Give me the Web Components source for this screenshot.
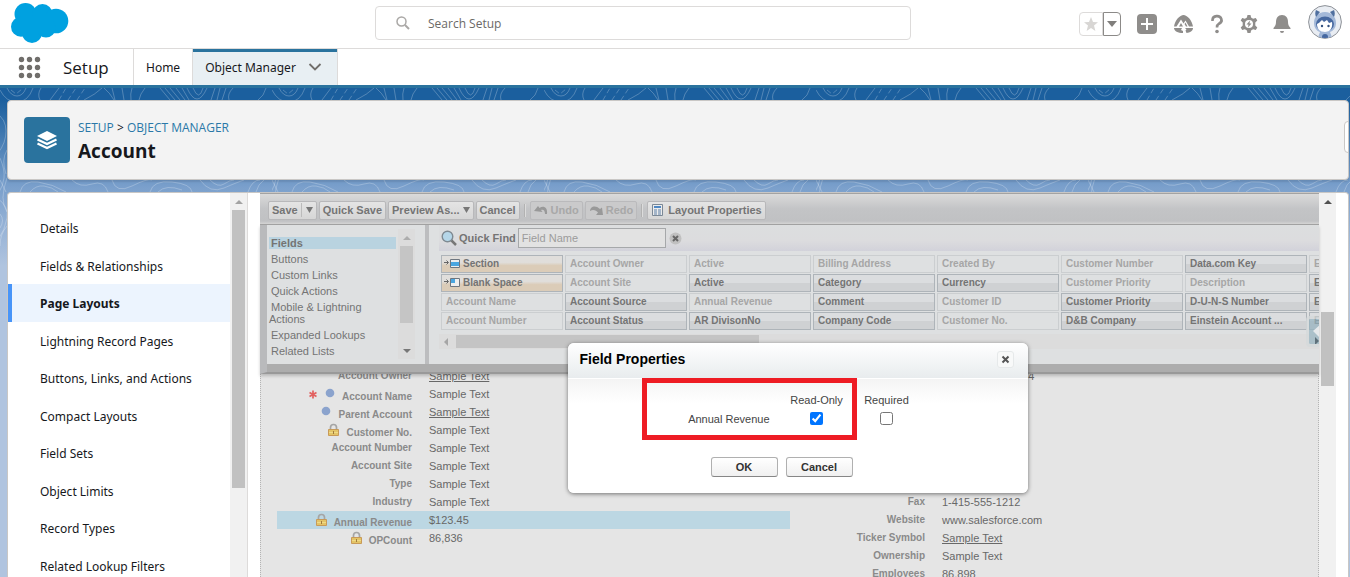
<!DOCTYPE html>
<html lang="en">
<head>
<meta charset="utf-8">
<title>Account | Object Manager</title>
<style>
  body {
    margin: 0;
    font-family: "Open Sans", "Noto Sans", sans-serif;
    font-size: 12px;
    color: #16181c;
    background: #fff;
  }
</style>
</head>
<body>
<setup-app></setup-app>

<script>
/**
 * Attach an open shadow root and fill it
 * @param {HTMLElement} host - The element that owns the root
 * @param {string} css - Styles for the root
 * @param {string} html - Markup for the root
 */
function fill(host, css, html) {
  host.attachShadow({ mode: 'open' }).innerHTML = `
    <style>* { box-sizing: border-box; } ${css}</style>
    ${html}
  `;
}

/**
 * SetupHeader web component
 * Logo, global search and the action icons
 */
class SetupHeader extends HTMLElement {
  constructor() {
    super();
    fill(this, `
      :host {
        display: grid;
        grid-template-columns: 375fr 536fr 439fr;
        align-items: center;
        height: 49px;
        border-bottom: 1px solid #dddbda;
        background: #fff;
      }
      .logo { display: block; margin-left: 10px; margin-bottom: 3px; }
      .search {
        display: flex;
        align-items: center;
        gap: 18px;
        height: 34px;
        padding-left: 20px;
        margin-bottom: 2px;
        border: 1px solid #dddbda;
        border-radius: 4px;
      }
      .search input {
        flex: 1;
        min-width: 0;
        padding: 0;
        border: 0;
        outline: 0;
        font: inherit;
        background: none;
      }
      .search input::placeholder { color: #6b6967; }
      .actions {
        display: flex;
        align-items: center;
        justify-content: flex-end;
        gap: 14px;
        padding-right: 8px;
      }
      button {
        display: block;
        padding: 0;
        border: 0;
        background: none;
      }
      svg { display: block; }
      .favorites { display: flex; margin-right: 2px; }
      .favorites button {
        display: grid;
        place-items: center;
        width: 24px;
        height: 24px;
        border: 1px solid #dddbda;
        border-radius: 4px 0 0 4px;
      }
      .favorites button + button {
        width: 18px;
        border-color: #8c8a88;
        border-radius: 0 4px 4px 0;
      }
      .avatar { margin-left: 3px; margin-bottom: 5px; }
    `, `
      <a href="#" class="logo" aria-label="Salesforce">
        <svg width="60" height="42" viewBox="10 2 60 42" fill="#00a1e0">
          <circle cx="25.500" cy="14" r="11"/><circle cx="42.500" cy="14" r="10"/>
          <circle cx="56" cy="21" r="12.300"/><circle cx="21" cy="26.700" r="10"/>
          <circle cx="32" cy="33" r="10"/><circle cx="46" cy="28" r="9.600"/>
          <path d="M21 16h32v16H21z"/>
        </svg>
      </a>
      <label class="search">
        <svg width="14" height="14" viewBox="0 0 14 14" fill="none" stroke="#aaa8a6" stroke-width="1.500">
          <circle cx="5.500" cy="5.500" r="4.500"/><path d="M9 9l4 4" stroke-width="2"/>
        </svg>
        <input type="text" placeholder="Search Setup" aria-label="Search Setup">
      </label>
      <div class="actions">
        <div class="favorites">
          <button aria-label="Add favorite">
            <svg width="16" height="16" viewBox="0 0 16 16" fill="#d8d6d4"><path d="M8 1l2 5 5 .3-4 3.300L12.400 15 8 12l-4.400 3L5 9.600 1 6.300 6 6z"/></svg>
          </button>
          <button aria-label="Favorites list">
            <svg width="10" height="6" viewBox="0 0 10 6" fill="#807e7c"><path d="M0 0h10L5 6z"/></svg>
          </button>
        </div>
        <button aria-label="Global actions">
          <svg width="20" height="20" viewBox="0 0 20 20"><rect width="20" height="20" rx="4" fill="#8f8d8b"/><path d="M10 4v12M4 10h12" stroke="#fff" stroke-width="2"/></svg>
        </button>
        <button aria-label="Guidance center">
          <svg width="24" height="20" viewBox="0 0 24 20" fill="#8f8d8b">
            <path d="M3 12.500C4 6 9 1 12.500 1S21 6 22 12.500h-4l-3.500-6-2 3-2.500-4-4.500 7z"/>
            <path d="M8 12.500l2-3.500 2 3.500zM13.500 10l1-1.500 2 4H15z"/>
            <path d="M3 14h8l-1 2 2 1v2c-5 0-9-2-9-5zM14 14h8c0 3-3 4.500-6.500 5l-1-2.500 1-1z"/>
          </svg>
        </button>
        <button aria-label="Help">
          <svg width="16" height="20" viewBox="0 0 16 20"><path d="M3.500 7V6a4.500 4 0 1 1 6.500 3.700C8.300 10.700 8 11.500 8 13.500" fill="none" stroke="#8f8d8b" stroke-width="2.600"/><circle cx="8" cy="17.500" r="1.800" fill="#8f8d8b"/></svg>
        </button>
        <button aria-label="Setup">
          <svg width="20" height="20" viewBox="0 0 20 20">
            <path d="M8.500 1h3l.6 2.600 2 1.200 2.700-.8 1.500 2.600-2 2v2.800l2 2-1.500 2.600-2.700-.8-2 1.200-.6 2.600h-3l-.6-2.600-2-1.200-2.700.8-1.500-2.600 2-2V8.600l-2-2L3.200 4l2.700.8 2-1.200z" fill="#8f8d8b"/>
            <circle cx="10" cy="10" r="4" fill="#fff"/><path d="M11 6.500l-3.500 4h2L9 13.500l3.500-4h-2z" fill="#8f8d8b"/>
          </svg>
        </button>
        <button aria-label="Notifications">
          <svg width="18" height="20" viewBox="0 0 18 20" fill="#8f8d8b"><path d="M9 1C5 1 3 4 3 8c0 3-1 4-2.500 6v1h17v-1C16 12 15 11 15 8c0-4-2-7-6-7zM7 17h4a2 2 0 0 1-4 0z"/></svg>
        </button>
        <button class="avatar" aria-label="View profile">
          <svg width="34" height="34" viewBox="0 0 34 34">
            <defs><clipPath id="face"><circle cx="17" cy="17" r="16"/></clipPath></defs>
            <circle cx="17" cy="17" r="16.400" fill="#e9edf3" stroke="#8d9197"/>
            <g clip-path="url(#face)">
              <path d="M17 7c7 0 11 5 11 11 0 5-3 8-6 9l3 8H9l3-8c-3-1-6-4-6-9C6 12 10 7 17 7z" fill="#a3b8d8"/>
              <path d="M8 5l4 2-4 5c-1-2-1-5 0-7zM26 5l-4 2 4 5c1-2 1-5 0-7z" fill="#4f6f9f"/>
              <ellipse cx="17" cy="19" rx="9" ry="7.500" fill="#4668a0"/>
              <path d="M9 19c2-1 3-2 5-4l2 2 3-2 2 3 3-1c1 6-2 10-7 10s-8-3-8-8z" fill="#fff"/>
              <circle cx="14" cy="21" r="1.200" fill="#31507e"/><circle cx="20.500" cy="21" r="1.200" fill="#31507e"/>
              <circle cx="17" cy="32" r="3" fill="#4668a0"/>
            </g>
          </svg>
        </button>
      </div>
    `);
  }
}

/**
 * SetupNav web component
 * App launcher, app name and the context tabs
 */
class SetupNav extends HTMLElement {
  constructor() {
    super();
    fill(this, `
      :host {
        display: flex;
        height: 39px;
        border-bottom: 3px solid #2a739e;
        background: #fff;
      }
      button { display: grid; place-items: center; padding: 0; border: 0; background: none; }
      .launcher { margin-left: 18px; }
      .app {
        display: flex;
        align-items: center;
        width: 93px;
        padding-left: 22px;
        border-right: 1px solid #dddbda;
        font-size: 17px;
      }
      nav { display: flex; font-family: "Noto Sans", sans-serif; }
      a {
        display: flex;
        align-items: center;
        padding: 0 12px;
        color: inherit;
        text-decoration: none;
      }
      .tab {
        display: flex;
        width: 146px;
        border: solid #dddbda;
        border-width: 0 1px;
        box-shadow: inset 0 3px #2a739e;
        background: #e8eff3;
      }
    `, `
      <button class="launcher" aria-label="App Launcher">
        <svg width="23" height="23" viewBox="0 0 23 23" fill="#706e6b">
          <circle cx="3.500" cy="3.500" r="2.700"/><circle cx="11.500" cy="3.500" r="2.700"/><circle cx="19.500" cy="3.500" r="2.700"/>
          <circle cx="3.500" cy="11.500" r="2.700"/><circle cx="11.500" cy="11.500" r="2.700"/><circle cx="19.500" cy="11.500" r="2.700"/>
          <circle cx="3.500" cy="19.500" r="2.700"/><circle cx="11.500" cy="19.500" r="2.700"/><circle cx="19.500" cy="19.500" r="2.700"/>
        </svg>
      </button>
      <div class="app">Setup</div>
      <nav>
        <a href="#">Home</a>
        <div class="tab">
          <a href="#">Object Manager</a>
          <button aria-label="Object Manager list">
            <svg width="14" height="8" viewBox="0 0 14 8" fill="none" stroke="#706e6b" stroke-width="1.800"><path d="M1.500 1L7 6.500 12.500 1"/></svg>
          </button>
        </div>
      </nav>
    `);
  }
}

/**
 * TopoBackdrop web component
 * The contour line artwork that fades out behind the cards
 */
class TopoBackdrop extends HTMLElement {
  constructor() {
    super();
    fill(this, `
      :host {
        position: absolute;
        inset: 0;
        background: linear-gradient(#1b5f9e 0, #1b5f9e 12px, #7ba0cc 100px, #b0c4df 178px);
      }
      svg { display: block; width: 100%; height: 178px; }
    `, `
      <svg aria-hidden="true">
        <defs>
          <pattern id="topo" width="272" height="178" patternUnits="userSpaceOnUse">
            <g fill="none" stroke="#fff" stroke-opacity=".24">
              <path d="M0 2q6 12 17 12T33 0M7 0q4 8 10 8t9-8M41 0q-4 6-1 12M50 12l9-12M84 12q12-6 18-12M104 0q6 5 10 12M112 0l3 12M122 0l2 12M132 0q-2 6-1 12M145 0q-5 6-6 12"/>
              <path d="M11 2l5 4 6-5M59 12l7-12M68 12l8-12M77 12l8-12" stroke-dasharray="5 3"/>
              <path d="M160 0l10 12M165 0l10 12M170 0l10 12M176 0l9 12M182 0l7 12M187 0q10 22 20 0M193 0q6 14 10 0M215 0l-4 12M220 0l-3 12M226 0l-4 12M233 0q-6 6-4 12M258 12q6-4 8-12"/>
              <path d="M20 104q3-12 18-10t28 10M30 104q6-7 14-6t14 6M0 92l6 12M72 92q8 8 20 4t16 8M112 92q4 14 20 6t20-6M150 104q3-12 22-10t20 10M158 104q8-8 24-2M200 92q10 14 24 8t20-8M210 92q8 8 14 4t10-4M248 104q4-12 12-12M256 104q2-8 8-12"/>
              <path d="M-4 25q10 6 10 18t-8 22M0 70q5 12 4 20t-5 14M7 62q-6 10-1 24M-3 110q12 8 10 20t-9 22M0 126q5 6 0 14M7 90q-8 22 0 34M7 138q-7 8-7 20"/>
            </g>
          </pattern>
        </defs>
        <rect width="100%" height="100%" fill="url(#topo)"/>
      </svg>
    `);
  }
}

/**
 * PageHeading web component
 * Object icon with breadcrumb; the object name is slotted
 */
class PageHeading extends HTMLElement {
  constructor() {
    super();
    fill(this, `
      :host {
        position: relative;
        display: flex;
        align-items: center;
        gap: 8px;
        height: 80px;
        padding-left: 16px;
        border: 1px solid #c9c7c5;
        border-radius: 4px;
        background: #f3f3f3;
        box-shadow: 0 2px 2px rgba(0, 0, 0, .1);
        overflow: hidden;
      }
      .icon {
        display: grid;
        place-items: center;
        width: 46px;
        height: 46px;
        border-radius: 4px;
        background: #2a739e;
      }
      .title { padding-top: 4px; }
      nav { line-height: 18px; }
      a { color: #2a78a8; text-decoration: none; }
      h1 { margin: 0; font-size: 19px; line-height: 28px; }
      .drawer {
        position: absolute;
        top: 20px;
        right: -12px;
        width: 16px;
        height: 32px;
        border: 1px solid #c9c7c5;
        border-radius: 4px;
        background: #fff;
      }
    `, `
      <div class="icon">
        <svg width="20" height="20" viewBox="0 0 20 20">
          <path d="M10 1l10 5-10 5L0 6z" fill="#fff"/>
          <path d="M.5 9.500L10 14l9.500-4.500M.5 13.500L10 18l9.500-4.500" fill="none" stroke="#fff" stroke-width="2.200"/>
        </svg>
      </div>
      <div class="title">
        <nav><a href="#">SETUP</a> &gt; <a href="#">OBJECT MANAGER</a></nav>
        <h1><slot></slot></h1>
      </div>
      <button class="drawer" aria-label="Open help panel"></button>
    `);
  }
}

/**
 * ScrollRail web component
 * Vertical scroll track; --start and --thumb place the thumb
 */
class ScrollRail extends HTMLElement {
  constructor() {
    super();
    fill(this, `
      :host {
        display: flex;
        flex-direction: column;
        flex: none;
        width: 17px;
        background: #f1f1f1;
      }
      .arrow { display: grid; place-items: center; height: 17px; }
      .thumb {
        height: var(--thumb);
        margin: var(--start, 0) 2px 0;
        background: var(--thumb-color, #c1c1c1);
      }
      .down { margin-top: auto; }
      :host(:not([down])) .down { display: none; }
    `, `
      <span class="arrow"><svg width="8" height="4" viewBox="0 0 8 4" style="fill:var(--up,#a3a3a3)"><path d="M4 0l4 4H0z"/></svg></span>
      <div class="thumb"></div>
      <span class="arrow down"><svg width="8" height="4" viewBox="0 0 8 4" fill="#777"><path d="M0 0h8L4 4z"/></svg></span>
    `);
  }
}

/**
 * SetupSidebar web component
 * Navigation between the parts of one object
 */
class SetupSidebar extends HTMLElement {
  constructor() {
    super();
    const items = ['Details', 'Fields & Relationships', 'Page Layouts', 'Lightning Record Pages',
      'Buttons, Links, and Actions', 'Compact Layouts', 'Field Sets', 'Object Limits',
      'Record Types', 'Related Lookup Filters'];
    const links = items.map((item) => `
      <a href="#" ${item === 'Page Layouts' ? 'aria-current="page"' : ''}>${item.replace('&', '&amp;')}</a>
    `).join('');
    fill(this, `
      :host {
        display: flex;
        flex: none;
        width: 240px;
        border-right: 1px solid #dddbda;
        font-family: "Noto Sans", sans-serif;
      }
      nav {
        display: grid;
        grid-auto-rows: 1fr;
        flex: 1;
        height: 391px;
        padding-top: 16px;
      }
      a {
        display: flex;
        align-items: center;
        padding: 2px 0 0 32px;
        color: inherit;
        text-decoration: none;
      }
      a[aria-current] {
        background: #ecf4fe;
        box-shadow: inset 4px 0 #4794f8;
        font-weight: 700;
      }
      scroll-rail { --thumb: 278px; }
    `, `<nav>${links}</nav><scroll-rail></scroll-rail>`);
  }
}

/**
 * ToolButton web component
 * Toolbar button; attributes: menu, split, disabled
 */
class ToolButton extends HTMLElement {
  constructor() {
    super();
    const split = this.hasAttribute('split');
    const arrow = this.hasAttribute('menu') || split
      ? `<svg class="${split ? 'split' : ''}" width="7" height="6" viewBox="0 0 7 6"><path d="M0 0h7L3.500 6z" fill="#777"/></svg>`
      : '';
    fill(this, `
      :host { display: block; }
      button {
        display: flex;
        align-items: center;
        gap: 3px;
        height: 19px;
        padding: 0 3px;
        border: 1px solid #b8b8ba;
        border-radius: 2px;
        font: bold 11px "Liberation Sans", Arial, sans-serif;
        color: #747474;
        background: linear-gradient(#e4e4e4, #d6d6d6);
        white-space: nowrap;
      }
      button:disabled { color: #a8a8a8; border-color: #bababc; background: #cacacb; }
      svg.split { box-sizing: content-box; padding: 4px 0 4px 4px; border-left: 1px solid #bbb; }
    `, `<button ${this.hasAttribute('disabled') ? 'disabled' : ''}><slot></slot>${arrow}</button>`);
  }
}

/**
 * EditorToolbar web component
 * Save, undo and property actions of the layout editor
 */
class EditorToolbar extends HTMLElement {
  constructor() {
    super();
    fill(this, `
      :host {
        display: flex;
        align-items: center;
        gap: 2px;
        height: 32px;
        padding: 2px 8px 0;
        border: solid #a3a3a3;
        border-width: 1px 0;
        background: linear-gradient(#dadada, #c3c4c6 50%, #c0c1c3 90%, #d4d4d4);
      }
      .sep { width: 2px; height: 13px; margin: 0 2px; background: #dcdcdc; border-left: 1px solid #b2b2b2; }
      svg { display: block; }
    `, `
      <tool-button split>Save</tool-button>
      <tool-button>Quick Save</tool-button>
      <tool-button menu>Preview As...</tool-button>
      <tool-button>Cancel</tool-button>
      <span class="sep"></span>
      <tool-button disabled>
        <svg width="14" height="12" viewBox="0 0 14 12"><path d="M0 7l4-5 1.500 2C9 1 14 3 13 10h-2c0-4-2-5-4-4L8.500 8z" fill="#999"/></svg>Undo
      </tool-button>
      <tool-button disabled>
        <svg width="14" height="12" viewBox="0 0 14 12"><path d="M14 11H7l2-2.500C7 6 4 5 1 7 1 3 6 0 11 5l2-1.500z" fill="#999"/></svg>Redo
      </tool-button>
      <span class="sep"></span>
      <tool-button>
        <svg width="14" height="12" viewBox="0 0 14 12"><path d="M1.500.5h10v11h-10z" fill="#ececec" stroke="#7b8896"/><path d="M3 2h7v2H3z" fill="#4f88c4"/><path d="M3 6h3M7 6h3M3 8h3M7 8h3M3 10h3M7 10h3" stroke="#5d7ea6"/></svg>Layout Properties
      </tool-button>
    `);
  }
}

/**
 * FieldPalette web component
 * Category list, quick find and the tiles that can be dragged to the layout
 */
class FieldPalette extends HTMLElement {
  constructor() {
    super();
    const categories = ['Fields', 'Buttons', 'Custom Links', 'Quick Actions',
      'Mobile &amp; Lightning Actions', 'Expanded Lookups', 'Related Lists'];
    // Tiles run down each column; a leading "-" marks one already on the layout
    const tiles = ['*Section', '*Blank Space', '-Account Name', '-Account Number',
      '-Account Owner', '-Account Site', 'Account Source', 'Account Status',
      '-Active', 'Active', '-Annual Revenue', 'AR DivisonNo',
      '-Billing Address', 'Category', 'Comment', 'Company Code',
      '-Created By', 'Currency', '-Customer ID', '-Customer No.',
      '-Customer Number', '-Customer Priority', 'Customer Priority', 'D&amp;B Company',
      'Data.com Key', '-Description', 'D-U-N-S Number', 'Einstein Account ...',
      '-E', 'E', 'E', 'E'];
    const special = {
      '*Section': '<path d="M6.500 1.500h9v8h-9z" fill="#eee" stroke="#6d7680"/><path d="M7 4h8v4H7z" fill="#4aa6e0"/>',
      '*Blank Space': '<path d="M6.500 1.500h9v8h-9z" fill="#eee" stroke="#6d7680"/><path d="M7 2h4v4H7z" fill="#4aa6e0"/>',
    };
    const tileHtml = tiles.map((tile) => {
      if (special[tile]) {
        return `<div class="tile special"><svg width="17" height="11" viewBox="0 0 17 11">
          <path d="M0 4.500h4M2.500 2.500l2 2-2 2" fill="none" stroke="#666"/>${special[tile]}</svg>${tile.slice(1)}</div>`;
      }
      return tile[0] === '-'
        ? `<div class="tile used">${tile.slice(1)}</div>`
        : `<div class="tile">${tile}</div>`;
    }).join('');
    fill(this, `
      :host {
        position: relative;
        z-index: 1;
        display: flex;
        height: 149px;
        border-left: 7px solid #b9babc;
        border-bottom: 2px solid #999;
        background: #dee0e1;
        box-shadow: inset 0 -8px #adadad, 0 2px 3px rgba(0, 0, 0, .2);
      }
      .categories {
        display: flex;
        width: 162px;
        height: 139px;
        border-right: 4px solid #bcbdbf;
      }
      ul {
        width: 131px;
        margin: 0;
        padding: 12px 2px 0;
        list-style: none;
        line-height: 12px;
      }
      li { margin-bottom: 4px; text-indent: 2px; }
      li:first-child { background: #b9d3e0; font-weight: 700; }
      .categories scroll-rail {
        --thumb: 77px;
        --thumb-color: #c5c5c5;
        --up: #adadad;
        height: 130px;
        margin-top: 4px;
        background: #dcdcdc;
      }
      .fields { flex: 1; min-width: 0; height: 139px; padding-left: 10px; overflow: hidden; position: relative; }
      .find {
        display: flex;
        align-items: center;
        gap: 2px;
        height: 26px;
        padding-left: 2px;
        font-weight: 700;
        background: linear-gradient(#dcdedf, #dcdcde 60%, #d2d2da);
      }
      input {
        width: 148px;
        height: 20px;
        padding: 0 3px;
        border: 1px solid #a6a8aa;
        font: 11px "Liberation Sans", Arial, sans-serif;
        background: #e2e2e2;
      }
      input::placeholder { color: #9c9c9c; }
      .clear { padding: 0; border: 0; background: none; }
      svg { display: block; flex: none; }
      .tiles {
        display: grid;
        grid-auto-flow: column;
        grid-template-rows: repeat(4, 18px);
        grid-auto-columns: 122px;
        gap: 1px 2px;
        padding: 4px 0 0 2px;
        font-size: 10px;
        font-weight: 700;
        line-height: 15px;
      }
      .tile {
        display: flex;
        padding-left: 4px;
        border: 1px solid #aeb4b9;
        background: linear-gradient(#dbdddf 50%, #cfd1d3 50%);
        white-space: nowrap;
      }
      .used { border-color: #cbced0; color: #a6a6a6; background: #dee0e1; }
      .special { gap: 2px; padding-left: 2px; background: linear-gradient(#e0dedb 40%, #dbccb8 60%); }
      .special svg { margin-top: 2px; }
      .hscroll { display: flex; align-items: center; gap: 8px; height: 15px; margin-top: 4px; padding-left: 5px; background: #dcdcdc; }
      .hscroll div { width: 303px; height: 13px; background: #c4c4c4; }
      .pager {
        position: absolute;
        top: 91px;
        right: -9px;
        display: grid;
        place-items: center;
        width: 22px;
        height: 31px;
        padding: 0;
        border: 3px solid rgba(213, 217, 219, .8);
        border-radius: 4px;
        background: rgba(150, 180, 192, .7);
        background-clip: padding-box;
      }
    `, `
      <div class="categories">
        <ul>${categories.map((name) => `<li>${name}</li>`).join('')}</ul>
        <scroll-rail down></scroll-rail>
      </div>
      <div class="fields">
        <div class="find">
          <svg width="16" height="16" viewBox="0 0 16 16"><path d="M10 10l5 5" stroke="#777" stroke-width="2.500"/><circle cx="6.500" cy="6.500" r="5.300" fill="#b5d6e8" stroke="#7f8a92" stroke-width="1.400"/></svg>
          <label for="find">Quick Find</label>
          <input id="find" type="text" placeholder="Field Name">
          <button class="clear" aria-label="Clear">
            <svg width="14" height="13" viewBox="0 0 14 13"><circle cx="7.500" cy="6.500" r="6" fill="#c0c0c0"/><path d="M5 4l5 5M10 4L5 9" stroke="#666" stroke-width="2"/></svg>
          </button>
        </div>
        <div class="tiles">${tileHtml}</div>
        <div class="hscroll">
          <svg width="4" height="8" viewBox="0 0 4 8"><path d="M4 0v8L0 4z" fill="#a6a6a6"/></svg>
          <div></div>
        </div>
        <button class="pager" aria-label="Show more">
          <svg width="16" height="25" viewBox="0 0 16 25"><path d="M11 6v13l-7-7z" fill="#e6e9eb"/><path d="M6 18l4 4-4 4z" fill="#5f717b"/></svg>
        </button>
      </div>
    `);
  }
}

/**
 * RecordCanvas web component
 * Two columns of sample field values
 */
class RecordCanvas extends HTMLElement {
  constructor() {
    super();
    const left = [
      ['Account Owner', 'Sample Text', { link: true }],
      ['Account Name', 'Sample Text', { icons: ['required', 'dot'] }],
      ['Parent Account', 'Sample Text', { icons: ['dot'], link: true }],
      ['Customer No.', 'Sample Text', { icons: ['lock'] }],
      ['Account Number', 'Sample Text'],
      ['Account Site', 'Sample Text'],
      ['Type', 'Sample Text'],
      ['Industry', 'Sample Text'],
      ['Annual Revenue', '$123.45', { icons: ['lock'], selected: true }],
      ['OPCount', '86,836', { icons: ['lock'] }],
    ];
    const right = [
      ['', 'GEN-2004-001234', { row: 1 }],
      ['Fax', '1-415-555-1212', { row: 8 }],
      ['Website', 'www.salesforce.com', { row: 9 }],
      ['Ticker Symbol', 'Sample Text', { row: 10, link: true }],
      ['Ownership', 'Sample Text', { row: 11 }],
      ['Employees', '86,898', { row: 12 }],
    ];
    fill(this, `
      :host {
        display: grid;
        grid-template-columns: 1fr 1fr;
        flex: 1;
        min-height: 0;
        padding: 0 15px 0 16px;
        border: dotted #b4b4b4;
        border-width: 0 1px;
        background: #e5e5e5;
        color: #686868;
        overflow: hidden;
      }
      .column { display: grid; grid-auto-rows: 18px; margin-top: -7px; align-content: start; }
      .field {
        display: grid;
        grid-template-columns: 135px 1fr;
        gap: 17px;
        line-height: 18px;
      }
      .selected { background: #bcd7e3; }
      .label {
        display: flex;
        justify-content: flex-end;
        color: #8a8a8a;
        font-size: 10px;
        font-weight: 700;
        white-space: nowrap;
      }
      .marked { align-items: center; gap: 7px; line-height: 12px; }
      .marked span { padding-top: 6px; }
      a { color: inherit; }
    `, `
      <div class="column">${left.map((field) => this.renderField(...field)).join('')}</div>
      <div class="column">${right.map((field) => this.renderField(...field)).join('')}</div>
    `);
  }

  /**
   * Markup for one field of the layout
   * @param {string} label - Field label
   * @param {string} value - Sample value
   * @param {object} options - icons, link, selected, row
   * @returns {string} The markup
   */
  renderField(label, value, { icons = [], link = false, selected = false, row = 0 } = {}) {
    const art = {
      required: '<svg width="10" height="14" viewBox="0 0 10 14"><path d="M5 3.500v8M1.500 5.500l7 4M8.500 5.500l-7 4" stroke="#e2605f" stroke-width="1.700"/></svg>',
      dot: '<svg width="10" height="14" viewBox="0 0 10 14"><circle cx="5" cy="6" r="4.300" fill="#8ba3cd"/></svg>',
      lock: '<svg width="11" height="14" viewBox="0 0 11 14"><path d="M2.500 7V4.500a3 3 0 0 1 6 0V7" fill="none" stroke="#a5a5a5" stroke-width="1.700"/><path d="M.5 6.500h10v6H.5z" fill="#e3c466" stroke="#c89a58"/><path d="M1 9.500h9" stroke="#f0da86"/><path d="M5 8h1v3H5z" fill="#a07b3d"/></svg>',
    };
    return `
      <div class="field ${selected ? 'selected' : ''}" ${row ? `style="grid-row:${row}"` : ''}>
        <div class="label ${icons.length ? 'marked' : ''}">${icons.map((icon) => art[icon]).join('')}<span>${label}</span></div>
        <div>${link ? `<a href="#">${value}</a>` : value}</div>
      </div>
    `;
  }
}

/**
 * FieldDialog web component
 * Read-only and required switches of one field, named by the slot
 */
class FieldDialog extends HTMLElement {
  constructor() {
    super();
    fill(this, `
      :host {
        display: block;
        width: 460px;
        border-radius: 6px;
        background: #fff;
        box-shadow: 0 1px 4px rgba(0, 0, 0, .5);
        color: #444;
        overflow: hidden;
      }
      header {
        display: flex;
        justify-content: space-between;
        align-items: center;
        height: 36px;
        padding: 0 14px 2px 12px;
        border-bottom: 1px solid #fff;
        background: linear-gradient(#fff, #e8ecee);
      }
      h2 { margin: 0 0 2px; font-size: 14px; color: #000; }
      .close {
        display: grid;
        place-items: center;
        width: 17px;
        height: 17px;
        padding: 0;
        border: 1px solid #e6e9ea;
        border-radius: 3px;
        background: #f8f9f9;
      }
      .body { padding: 11px 0 16px 74px; background: linear-gradient(#f4f4f4, #fff 24px); }
      table { border-spacing: 0; table-layout: fixed; width: 280px; }
      td, th { padding: 0; height: 19px; font-weight: 400; text-align: center; }
      thead td { width: 140px; }
      th[scope=row] { padding-right: 12px; text-align: right; }
      input { display: block; width: 13px; height: 13px; margin: 0 auto; }
      footer { display: flex; gap: 8px; padding: 29px 0 0 69px; }
      footer button {
        width: 67px;
        height: 20px;
        padding: 0;
        border: 1px solid #b0b0b0;
        border-bottom-color: #868686;
        border-radius: 3px;
        font: bold 11px "Liberation Sans", Arial, sans-serif;
        color: #333;
        background: linear-gradient(#fff, #f0f0f0);
      }
      .callout {
        position: absolute;
        top: 35px;
        left: 74px;
        width: 215px;
        height: 62px;
        border: 5px solid #ee1c24;
      }
    `, `
      <header>
        <h2>Field Properties</h2>
        <button class="close" aria-label="Close">
          <svg width="9" height="9" viewBox="0 0 9 9"><path d="M1.500 1.500l6 6M7.500 1.500l-6 6" stroke="#555" stroke-width="2"/></svg>
        </button>
      </header>
      <div class="body">
        <table>
          <thead><tr>
            <td></td>
            <th scope="col"><label for="readonly">Read-Only</label></th>
            <th scope="col"><label for="required">Required</label></th>
          </tr></thead>
          <tbody><tr>
            <th scope="row"><slot></slot></th>
            <td><input id="readonly" type="checkbox" checked></td>
            <td><input id="required" type="checkbox"></td>
          </tr></tbody>
        </table>
        <footer><button>OK</button><button>Cancel</button></footer>
      </div>
      <div class="callout"></div>
    `);
  }
}

/**
 * LayoutEditor web component
 * Toolbar and palette over the record, with the field dialog on top
 */
class LayoutEditor extends HTMLElement {
  constructor() {
    super();
    fill(this, `
      :host {
        position: relative;
        display: flex;
        flex-direction: column;
        flex: 1;
        min-width: 0;
        font: 11px "Liberation Sans", Arial, sans-serif;
        color: #747474;
      }
      field-dialog {
        position: absolute;
        z-index: 2;
        top: 150px;
        left: calc(50% - 222px);
      }
    `, `
      <editor-toolbar></editor-toolbar>
      <field-palette></field-palette>
      <record-canvas></record-canvas>
      <field-dialog>Annual Revenue</field-dialog>
    `);
  }
}

/**
 * SetupApp web component
 * The whole setup page
 */
class SetupApp extends HTMLElement {
  constructor() {
    super();
    fill(this, `
      :host {
        display: flex;
        flex-direction: column;
        height: 100vh;
        overflow: hidden;
      }
      main {
        position: relative;
        display: flex;
        flex-direction: column;
        gap: 12px;
        flex: 1;
        min-height: 0;
        padding: 12px 1px 0 7px;
      }
      page-heading { flex: none; }
      .card {
        position: relative;
        display: flex;
        flex: 1;
        min-height: 0;
        padding-right: 12px;
        border: 1px solid #c9c7c5;
        border-bottom: 0;
        border-radius: 4px 4px 0 0;
        background: #fff;
        overflow: hidden;
      }
      layout-editor { margin-left: 12px; }
      .card > scroll-rail { --start: 102px; --thumb: 74px; --up: #505050; }
    `, `
      <setup-header></setup-header>
      <setup-nav></setup-nav>
      <main>
        <topo-backdrop></topo-backdrop>
        <page-heading>Account</page-heading>
        <div class="card">
          <setup-sidebar></setup-sidebar>
          <layout-editor></layout-editor>
          <scroll-rail></scroll-rail>
        </div>
      </main>
    `);
  }
}

// Register the custom elements
customElements.define('setup-header', SetupHeader);
customElements.define('setup-nav', SetupNav);
customElements.define('topo-backdrop', TopoBackdrop);
customElements.define('page-heading', PageHeading);
customElements.define('scroll-rail', ScrollRail);
customElements.define('setup-sidebar', SetupSidebar);
customElements.define('tool-button', ToolButton);
customElements.define('editor-toolbar', EditorToolbar);
customElements.define('field-palette', FieldPalette);
customElements.define('record-canvas', RecordCanvas);
customElements.define('field-dialog', FieldDialog);
customElements.define('layout-editor', LayoutEditor);
customElements.define('setup-app', SetupApp);
</script>
</body>
</html>
